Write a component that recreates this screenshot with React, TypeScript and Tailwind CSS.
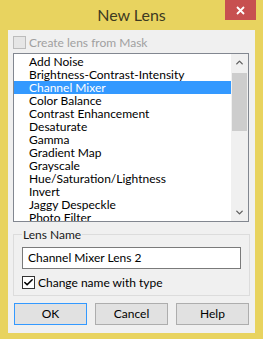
import { ChevronUp, ChevronDown, Check } from "lucide-react";

const effects = [
  "Add Noise",
  "Brightness-Contrast-Intensity",
  "Channel Mixer",
  "Color Balance",
  "Contrast Enhancement",
  "Desaturate",
  "Gamma",
  "Gradient Map",
  "Grayscale",
  "Hue/Saturation/Lightness",
  "Invert",
  "Jaggy Despeckle",
  "Photo Filter",
];

const selected = "Channel Mixer";

const Button = ({ label, primary }: { label: string; primary?: boolean }) => (
  <button
    type="button"
    className={`w-[73px] h-[22px] flex items-center justify-center bg-[#e1e1e1] border text-[12px] text-black ${
      primary ? "border-[#3399ff]" : "border-[#adadad]"
    }`}
  >
    {label}
  </button>
);

const App = () => {
  return (
    <div
      className="w-[263px] h-[339px] bg-[#e8d35f] flex flex-col text-[12px] text-black"
      style={{ fontFamily: 'Lato, "Noto Sans", sans-serif' }}
    >
      {/* title bar */}
      <div className="h-[30px] grid grid-cols-[1fr_auto_1fr] items-start">
        <div />
        <div className="pt-[5px] text-[16px] leading-[20px] text-[#3d3a22]">New Lens</div>
        <div className="flex justify-end pr-[7px]">
          <div className="w-[31px] h-[20px] bg-[#c75050] flex items-center justify-center">
            <svg width="9" height="9" viewBox="0 0 9 9">
              <path d="M1 1 L8 8 M8 1 L1 8" stroke="white" strokeWidth="1.8" />
            </svg>
          </div>
        </div>
      </div>

      {/* client area */}
      <div className="mx-[8px] h-[303px] bg-[#f0f0f0] flex flex-col pl-[5px] pr-[6px]">
        <label className="mt-[6px] flex items-center gap-[3px] h-[13px] text-[#a0a0a0]">
          <span className="w-[13px] h-[13px] border border-[#bcbcbc] bg-[#e6e6e6]" />
          <span className="leading-[13px]">Create lens from Mask</span>
        </label>

        {/* list box */}
        <div className="mt-[4px] h-[169px] border border-[#828790] bg-white flex">
          <ul className="flex-1 pt-[1px] overflow-hidden">
            {effects.map((e) => (
              <li
                key={e}
                className={`h-[13px] leading-[13px] pl-[15px] whitespace-nowrap ${
                  e === selected ? "bg-[#3399ff] text-white" : ""
                }`}
              >
                {e}
              </li>
            ))}
          </ul>
          <div className="w-[17px] bg-[#f0f0f0] flex flex-col items-center">
            <div className="h-[17px] flex items-center justify-center text-[#606060]">
              <ChevronUp size={11} strokeWidth={3} />
            </div>
            <div className="mt-[2px] w-[15px] h-[58px] bg-[#cdcdcd]" />
            <div className="flex-1" />
            <div className="h-[17px] flex items-center justify-center text-[#606060]">
              <ChevronDown size={11} strokeWidth={3} />
            </div>
          </div>
        </div>

        {/* group box */}
        <fieldset className="mt-[6px] h-[68px] border border-[#dcdcdc] px-[8px] flex flex-col">
          <legend className="px-[1px] leading-[13px] text-[#1a1a1a]">Lens Name</legend>
          <div className="mt-[6px] w-[219px] h-[22px] border border-[#7a7a7a] bg-white pl-[5px] flex items-center">
            Channel Mixer Lens 2
          </div>
          <label className="mt-[7px] flex items-center gap-[3px] h-[13px]">
            <span className="w-[13px] h-[13px] border border-[#333333] bg-white flex items-center justify-center">
              <Check size={11} strokeWidth={3.5} />
            </span>
            <span className="leading-[13px]">Change name with type</span>
          </label>
        </fieldset>

        <div className="mt-[7px] flex justify-between pl-[1px]">
          <Button label="OK" primary />
          <Button label="Cancel" />
          <Button label="Help" />
        </div>
      </div>
    </div>
  );
};

export default App;
